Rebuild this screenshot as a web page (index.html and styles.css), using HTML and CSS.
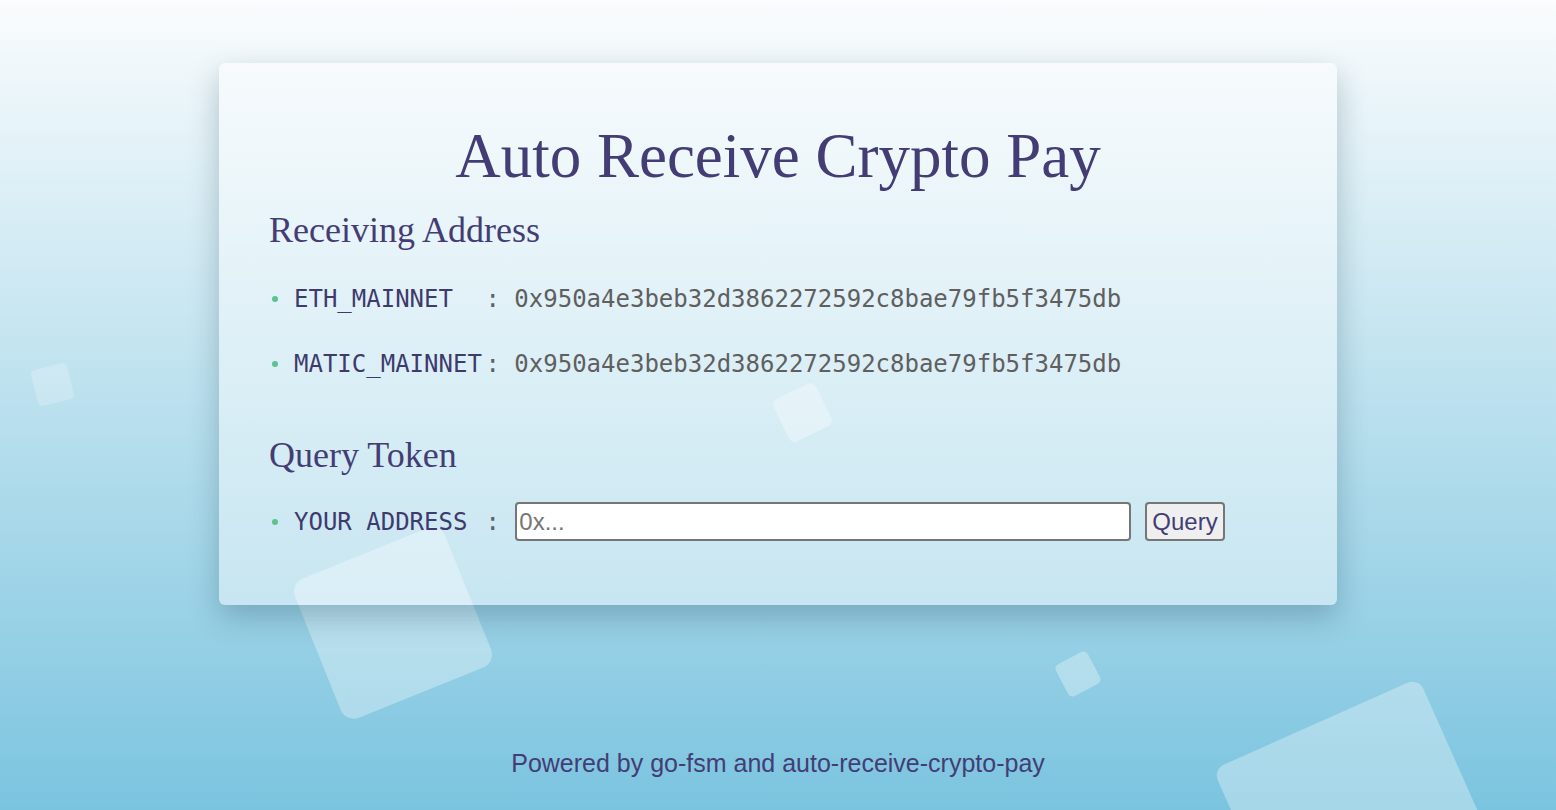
FILE: index.html
```html
<!DOCTYPE html>
<html lang="en">
<head>
<meta charset="utf-8">
<title>Auto Receive Crypto Pay</title>
<link rel="stylesheet" href="styles.css">
</head>
<body>
<div class="bg-squares" aria-hidden="true">
  <span class="sq sq1"></span>
  <span class="sq sq2"></span>
  <span class="sq sq3"></span>
  <span class="sq sq4"></span>
  <span class="sq sq5"></span>
</div>
<main class="card">
  <h1 class="title">Auto Receive Crypto Pay</h1>
  <h2 class="section-title">Receiving Address</h2>
  <ul class="addr-list">
    <li class="addr-item"><span class="label">ETH_MAINNET</span><span class="sep">: </span><span class="value">0x950a4e3beb32d3862272592c8bae79fb5f3475db</span></li>
    <li class="addr-item"><span class="label">MATIC_MAINNET</span><span class="sep">: </span><span class="value">0x950a4e3beb32d3862272592c8bae79fb5f3475db</span></li>
  </ul>
  <h2 class="section-title query-title">Query Token</h2>
  <form class="query-row" onsubmit="return false;">
    <span class="label">YOUR ADDRESS</span><span class="sep">: </span>
    <input class="addr-input" type="text" placeholder="0x...">
    <button class="query-btn" type="submit">Query</button>
  </form>
</main>
<footer class="footer">Powered by go-fsm and auto-receive-crypto-pay</footer>
</body>
</html>
```
FILE: styles.css
```css
html, body {
  margin: 0;
  padding: 0;
}

html {
  overflow: hidden;
}

body {
  position: relative;
  height: 810px;
  overflow: hidden;
  background: linear-gradient(180deg, #fafcfd 0%, #7bc4df 100%);
  font-family: "Liberation Sans", Arial, sans-serif;
  color: #443d75;
}

.bg-squares {
  position: absolute;
  inset: 0;
  z-index: 0;
  overflow: hidden;
  pointer-events: none;
}

.sq {
  position: absolute;
  display: block;
  background: rgba(255, 255, 255, 0.32);
}

.sq1 { left: 34px; top: 366px; width: 37px; height: 37px; border-radius: 5px; transform: rotate(-14deg); background: rgba(255,255,255,0.22); }
.sq2 { left: 779px; top: 389px; width: 47px; height: 47px; border-radius: 6px; transform: rotate(-26deg); }
.sq3 { left: 312px; top: 548px; width: 162px; height: 150px; border-radius: 14px; transform: rotate(-22deg); }
.sq4 { left: 1060px; top: 656px; width: 36px; height: 36px; border-radius: 5px; transform: rotate(-28deg); }
.sq5 { left: 1249px; top: 714px; width: 225px; height: 225px; border-radius: 12px; transform: rotate(-24deg); }

.card {
  position: relative;
  z-index: 1;
  box-sizing: border-box;
  width: 1118px;
  margin: 63px auto 0;
  padding: 57px 50px 64px;
  background: rgba(255, 255, 255, 0.44);
  border-radius: 6px;
  box-shadow: 0 12px 30px rgba(20, 60, 80, 0.28);
}

.title {
  margin: 0;
  font-family: "Liberation Serif", "Times New Roman", serif;
  font-weight: 400;
  font-size: 63px;
  line-height: 72px;
  text-align: center;
  color: #443d75;
}

.section-title {
  margin: 16px 0 0;
  font-family: "Liberation Serif", "Times New Roman", serif;
  font-weight: 400;
  font-size: 36px;
  line-height: 44px;
  color: #443d75;
}

.query-title {
  margin-top: 53px;
}

.addr-list {
  margin: 31px 0 0;
  padding: 0;
  list-style: none;
  display: flex;
  flex-direction: column;
  gap: 33px;
}

.addr-item,
.query-row {
  display: flex;
  align-items: center;
  font-family: "DejaVu Sans Mono", monospace;
  font-size: 24px;
  line-height: 32px;
}

.addr-item::before,
.query-row::before {
  content: "";
  width: 6px;
  height: 6px;
  border-radius: 50%;
  background: #5cc28f;
  margin: 0 16px 0 3px;
  flex: none;
}

.label {
  width: 13.25ch;
  flex: none;
  color: #3e3a6e;
  white-space: pre;
}

.sep {
  color: #5f5f5f;
  white-space: pre;
  flex: none;
}

.value {
  color: #5f5f5f;
}

.query-row {
  margin: 25px 0 0;
}

.addr-input {
  box-sizing: border-box;
  width: 616px;
  height: 39px;
  margin: 0 0 0 1px;
  padding: 0 2px;
  border: 2px solid #767676;
  border-radius: 4px;
  background: #fff;
  font-family: "Liberation Sans", Arial, sans-serif;
  font-size: 24px;
  color: #222;
  outline: none;
}

.addr-input::placeholder {
  color: #757575;
}

.query-btn {
  box-sizing: border-box;
  height: 39px;
  margin-left: 14px;
  padding: 0 5px;
  border: 2px solid #767676;
  border-radius: 4px;
  background: #efefef;
  font-family: "Liberation Sans", Arial, sans-serif;
  font-size: 24px;
  color: #443d75;
}

.footer {
  position: relative;
  z-index: 1;
  margin-top: 142px;
  text-align: center;
  font-family: "Liberation Sans", Arial, sans-serif;
  font-size: 25px;
  line-height: 32px;
  color: #443d75;
}
```
